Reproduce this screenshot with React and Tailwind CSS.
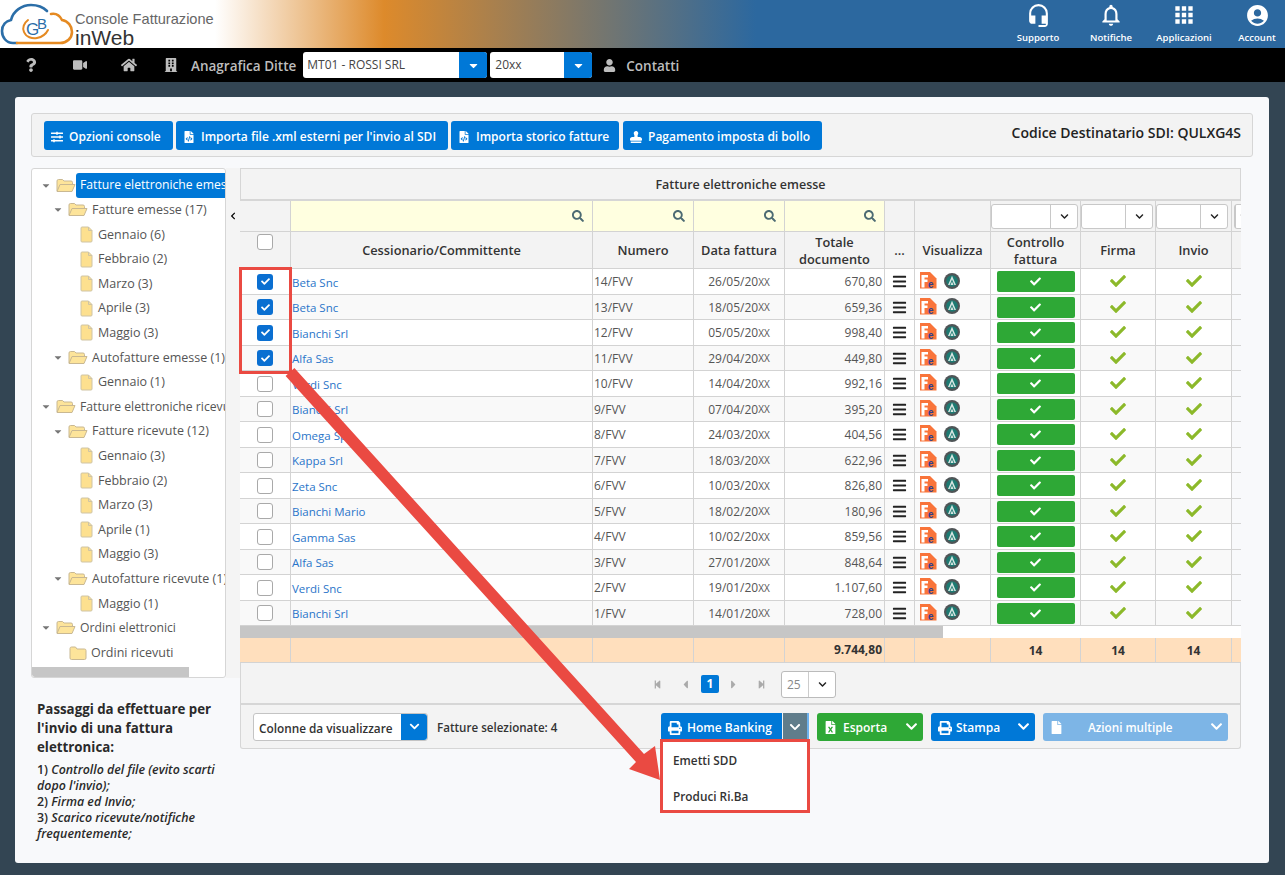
import React from "react";
import { FaQuestion, FaVideo, FaHome, FaBuilding, FaUser, FaCaretDown, FaChevronDown, FaChevronLeft, FaSearch, FaPrint, FaFileExcel, FaFile, FaStamp, FaFileCode, FaCheck, FaBars, FaCaretLeft, FaCaretRight, FaStepBackward, FaStepForward, FaSlidersH } from "react-icons/fa";
import { MdHeadsetMic, MdNotificationsNone, MdApps, MdAccountCircle } from "react-icons/md";

const cols = "grid grid-cols-[51px_302px_101px_91px_100px_30px_76px_90px_75px_76px_9px]";
const rows = [
  ["Beta Snc", "14/FVV", "26/05/20", "670,80", 1],
  ["Beta Snc", "13/FVV", "18/05/20", "659,36", 1],
  ["Bianchi Srl", "12/FVV", "05/05/20", "998,40", 1],
  ["Alfa Sas", "11/FVV", "29/04/20", "449,80", 1],
  ["Verdi Snc", "10/FVV", "14/04/20", "992,16", 0],
  ["Bianchi Srl", "9/FVV", "07/04/20", "395,20", 0],
  ["Omega Spa", "8/FVV", "24/03/20", "404,56", 0],
  ["Kappa Srl", "7/FVV", "18/03/20", "622,96", 0],
  ["Zeta Snc", "6/FVV", "10/03/20", "826,80", 0],
  ["Bianchi Mario", "5/FVV", "18/02/20", "180,96", 0],
  ["Gamma Sas", "4/FVV", "10/02/20", "859,56", 0],
  ["Alfa Sas", "3/FVV", "27/01/20", "848,64", 0],
  ["Verdi Snc", "2/FVV", "19/01/20", "1.107,60", 0],
  ["Bianchi Srl", "1/FVV", "14/01/20", "728,00", 0],
];
const tree = [
  [0, "open", "Fatture elettroniche emesse", true],
  [1, "open", "Fatture emesse (17)"],
  [2, "file", "Gennaio (6)"],
  [2, "file", "Febbraio (2)"],
  [2, "file", "Marzo (3)"],
  [2, "file", "Aprile (3)"],
  [2, "file", "Maggio (3)"],
  [1, "open", "Autofatture emesse (1)"],
  [2, "file", "Gennaio (1)"],
  [0, "open", "Fatture elettroniche ricevute"],
  [1, "open", "Fatture ricevute (12)"],
  [2, "file", "Gennaio (3)"],
  [2, "file", "Febbraio (2)"],
  [2, "file", "Marzo (3)"],
  [2, "file", "Aprile (1)"],
  [2, "file", "Maggio (3)"],
  [1, "open", "Autofatture ricevute (1)"],
  [2, "file", "Maggio (1)"],
  [0, "open", "Ordini elettronici"],
  [1, "closed", "Ordini ricevuti"],
];

function FolderOpen() {
  return (
    <svg width="20" height="15" viewBox="0 0 20 15" className="shrink-0">
      <path d="M1 13V3q0-1.500 1.500-1.500h4L8 3h7q1.500 0 1.500 1.500V6" fill="#fde49a" stroke="#c9b892" />
      <path d="M1 13.500 4 6.500h15l-3 7z" fill="#fde49a" stroke="#c9b892" />
    </svg>
  );
}
function FolderClosed() {
  return (
    <svg width="18" height="14" viewBox="0 0 18 14" className="shrink-0">
      <path d="M1 12V2.500Q1 1 2.500 1h4L8 3h7.500Q17 3 17 4.500V12q0 1.500-1.500 1.500h-13Q1 13.500 1 12z" fill="#fde49a" stroke="#c9b892" />
    </svg>
  );
}
function FileIco() {
  return (
    <svg width="13" height="17" viewBox="0 0 13 17" className="shrink-0">
      <path d="M1 2q0-1 1-1h6.500L12 4.500V15q0 1-1 1H2q-1 0-1-1z" fill="#fde08f" stroke="#cfc4a4" />
      <path d="M8.500 1v3.500H12" fill="none" stroke="#cfc4a4" />
    </svg>
  );
}
function Logo() {
  return (
    <svg width="74" height="48" viewBox="0 0 74 48" className="shrink-0">
      <path d="M17 43H13C6 43 2 37 2 31c0-6 4-10 9-11C13 11 22 5 31 5c6 0 12 2 16 6" fill="none" stroke="#2b6ea8" strokeWidth="2.600" strokeLinecap="round" />
      <path d="M17 43h43c7 0 12-5 12-11 0-6-4-11-10-12-2-4-6-7-11-6" fill="none" stroke="#e58a22" strokeWidth="2.600" strokeLinecap="round" />
      <path d="M28 20C24 23 22 28 24 32c2 5 8 7 13 6 5-1 9-4 11-8" fill="none" stroke="#e58a22" strokeWidth="2" strokeLinecap="round" />
      <text x="26" y="35" fontFamily="'Liberation Sans',sans-serif" fontSize="17" fill="#2b6ea8">G</text>
      <text x="37" y="29" fontFamily="'Liberation Sans',sans-serif" fontSize="15" fill="#2b6ea8">B</text>
    </svg>
  );
}
function FeIcon() {
  return (
    <svg width="17" height="17" viewBox="0 0 17 17" className="shrink-0">
      <path d="M0 0h10l6.500 6.500V16.500H0z" fill="#f9743a" />
      <path d="M1.500 3h6.500v2.500H4.500v2H7.500V10H4.500v5.500h-3z" fill="#fff" />
      <text x="8" y="15.500" fontFamily="'Liberation Sans',sans-serif" fontWeight="700" fontSize="10" fill="#2f3f8f">e</text>
    </svg>
  );
}
function Badge() {
  return (
    <svg width="16" height="16" viewBox="0 0 16 16" className="shrink-0">
      <circle cx="8" cy="8" r="8" fill="#4f5557" />
      <circle cx="8" cy="8" r="5.800" fill="#1d7a72" />
      <path d="M8 2.800 12 12h-1.600L8 6.500 5.600 12H4z M8 8.500l1.500 3.500h-3z" fill="#d6e6e2" />
    </svg>
  );
}
function Box({ on }) {
  return on ? (
    <span className="flex h-4 w-4 items-center justify-center rounded-[3px] bg-[#0a6fd1] text-white">
      <FaCheck className="text-[9px]" />
    </span>
  ) : (
    <span className="block h-4 w-4 rounded-[3px] border border-[#a9a9a9] bg-white" />
  );
}
function Btn({ icon, children, w }) {
  return (
    <div className={`flex h-[29px] items-center gap-[6px] rounded-[3px] bg-[#0078d7] pl-[7px] pt-[3px] text-[12px] font-semibold text-white ${w}`}>
      <span className="flex w-[12px] justify-center">{icon}</span>
      <span>{children}</span>
    </div>
  );
}
function SplitBtn({ icon, label, bg, w, tw }) {
  return (
    <div className={`flex h-[28px] items-center rounded-[3px] ${bg} text-[12px] font-semibold text-white ${w}`}>
      <span className={`flex h-full items-center pt-[2px] ${tw}`}>{icon}{label}</span>
      <span className="ml-auto mr-[4px] flex w-4 justify-center"><FaChevronDown className="text-[13px]" /></span>
    </div>
  );
}
function Cell({ className = "", children, bg = "" }) {
  return <div className={`flex min-w-0 items-center overflow-hidden border-r border-[#d3d3d3] ${bg} ${className}`}>{children}</div>;
}
function Drop({ w }) {
  return (
    <div className={`flex h-[25px] items-stretch rounded-[3px] border border-[#c8c8c8] bg-white ${w}`}>
      <span className="flex-1" />
      <span className="flex w-[27px] items-center justify-center border-l border-[#c8c8c8]"><FaChevronDown className="text-[9px] text-[#222]" /></span>
    </div>
  );
}

export default function App() {
  return (
    <div className="relative flex h-[875px] w-[1285px] flex-col overflow-hidden bg-[#334553] font-['Open_Sans','Noto_Sans',sans-serif] text-[12px] text-[#333]">
      <header className="flex h-[48px] shrink-0 items-stretch justify-between bg-[linear-gradient(90deg,#fff_0,#fff_215px,#dd8a2b_384px,#2c689f_756px,#2c689f_100%)]">
        <div className="flex items-center">
          <Logo />
          <div className="ml-[1px] flex flex-col self-start pt-[11px] text-[#555]">
            <span className="font-['Liberation_Sans',sans-serif] text-[14.600px] leading-[17px] text-[#666]">Console Fatturazione</span>
            <span className="font-['Liberation_Sans',sans-serif] text-[21px] leading-[20px] text-[#333]">inWeb</span>
          </div>
        </div>
        <nav className="flex items-start text-white">
          {[
            [<MdHeadsetMic key="a" className="text-[25px]" />, "Supporto", "w-[90px]"],
            [<MdNotificationsNone key="b" className="text-[26px]" />, "Notifiche", "w-[56px]"],
            [<MdApps key="c" className="text-[26px]" />, "Applicazioni", "w-[90px]"],
            [<MdAccountCircle key="d" className="text-[25px]" />, "Account", "w-[56px]"],
          ].map(([ic, t, w]) => (
            <div key={t} className={`flex flex-col items-center pt-[1px] ${w}`}>
              <div className="flex h-[28px] items-center">{ic}</div>
              <span className="mt-[2px] whitespace-nowrap text-[9.500px] font-semibold leading-[14px]">{t}</span>
            </div>
          ))}
        </nav>
      </header>
      <div className="flex h-[34px] shrink-0 items-center bg-black text-[#bdbdbd]">
        <FaQuestion className="ml-[24px] text-[14px]" />
        <FaVideo className="ml-[35px] text-[14px]" />
        <FaHome className="ml-[34px] text-[16px]" />
        <FaBuilding className="ml-[27px] text-[14px]" />
        <span className="ml-[13px] pt-[2px] text-[13.500px] font-semibold">Anagrafica Ditte</span>
        <div className="ml-[7px] flex h-[26px] w-[184px] rounded-[3px] bg-white">
          <span className="flex-1 pl-[4px] text-[12px] leading-[26px] text-[#444]">MT01 - ROSSI SRL</span>
          <span className="flex w-[28px] items-center justify-center rounded-r-[3px] bg-[#0078d7] text-white"><FaCaretDown className="text-[13px]" /></span>
        </div>
        <div className="ml-[3px] flex h-[26px] w-[102px] rounded-[3px] bg-white">
          <span className="flex-1 pl-[5px] text-[12px] leading-[26px] text-[#444]">20xx</span>
          <span className="flex w-[28px] items-center justify-center rounded-r-[3px] bg-[#0078d7] text-white"><FaCaretDown className="text-[13px]" /></span>
        </div>
        <FaUser className="ml-[11px] text-[13px]" />
        <span className="ml-[10px] pt-[2px] text-[13.500px] font-semibold">Contatti</span>
      </div>

      <main className="mx-[15px] mt-[15px] flex h-[766px] w-[1254px] flex-col rounded-[3px] bg-[#f8f9fb] px-[16px] pt-[16px]">
        <div className="flex h-[44px] shrink-0 items-center justify-between rounded-[3px] border border-[#d6d6d6] bg-[#f3f3f3] pl-[12px] pr-[11px]">
          <div className="flex">
            <Btn w="w-[129px]" icon={<FaSlidersH className="text-[12px]" />}>Opzioni console</Btn>
            <div className="w-[3px]" />
            <Btn w="w-[272px]" icon={<FaFileCode className="text-[12px]" />}>Importa file .xml esterni per l'invio al SDI</Btn>
            <div className="w-[3px]" />
            <Btn w="w-[168px]" icon={<FaFileCode className="text-[12px]" />}>Importa storico fatture</Btn>
            <div className="w-[4px]" />
            <Btn w="w-[199px]" icon={<FaStamp className="text-[12px]" />}>Pagamento imposta di bollo</Btn>
          </div>
          <span className="mb-[6px] text-[14px] font-semibold text-[#222]">Codice Destinatario SDI: QULXG4S</span>
        </div>

        <div className="mt-[11px] flex flex-1 items-start">
          <aside className="flex w-[209px] shrink-0 flex-col">
            <div className="flex items-start">
              <div className="relative h-[510px] w-[195px] overflow-hidden rounded-[3px] border border-[#d6d6d6] bg-white pt-[4px] text-[12.500px] text-[#555]">
                {tree.map(([lvl, kind, t, sel], i) => (
                  <div key={i} className={`flex h-[24.600px] items-center whitespace-nowrap ${lvl === 0 ? "pl-[8px] text-[12.200px]" : lvl === 1 ? "pl-[20px]" : "pl-[48px]"}`}>
                    {kind === "open" ? <FaCaretDown className="w-[12px] shrink-0 text-[11px] text-[#777]" /> : null}
                    {kind === "closed" ? <span className="w-[17px] shrink-0" /> : null}
                    {kind === "file" ? <FileIco /> : kind === "open" ? <span className="ml-[4px] shrink-0"><FolderOpen /></span> : <FolderClosed />}
                    {sel ? (
                      <span className="flex h-[25px] flex-1 items-center rounded-l-[3px] bg-[#0078d7] pl-[4px] text-white">{t}</span>
                    ) : (
                      <span className={kind === "file" ? "ml-[5px] pt-[1px]" : "ml-[4px] pt-[1px]"}>{t}</span>
                    )}
                  </div>
                ))}
                <div className="absolute bottom-0 left-0 h-[10px] w-[157px] rounded-bl-[3px] bg-[#c6c6c6]" />
              </div>
              <div className="flex h-[510px] w-[14px] shrink-0 flex-col items-center bg-[#f4f4f4] pt-[44px]">
                <FaChevronLeft className="text-[8px] text-black" />
              </div>
            </div>
            <div className="mt-[22px] w-[192px] pl-[6px] text-[#2a2a2a]">
              <p className="text-[13.300px] font-bold leading-[19px]">Passaggi da effettuare per l'invio di una fattura elettronica:</p>
              <div className="mt-[5px] whitespace-nowrap text-[12.400px] font-semibold italic leading-[16px]">
                <p><span className="not-italic">1) </span>Controllo del file (evito scarti</p>
                <p>dopo l'invio);</p>
                <p><span className="not-italic">2) </span>Firma ed Invio;</p>
                <p><span className="not-italic">3) </span>Scarico ricevute/notifiche</p>
                <p>frequentemente;</p>
              </div>
            </div>
          </aside>

          <section className="w-[1001px]">
            <div className="flex h-[33px] items-center justify-center border border-b-2 border-[#d6d6d6] bg-[#f3f3f3] pt-[2px] text-[12.500px] font-semibold text-[#333]">Fatture elettroniche emesse</div>
            <div className={`${cols} h-[31px] overflow-hidden border-b border-[#d3d3d3]`}>
              <Cell bg="bg-[#f3f3f3]" />
              {[0, 1, 2, 3].map((k) => (
                <Cell key={k} bg="bg-[#ffffe0]" className="justify-end pr-[8px]"><FaSearch className="text-[12px] text-[#4d6b73]" /></Cell>
              ))}
              <Cell bg="bg-[#f3f3f3]" />
              <Cell bg="bg-[#f3f3f3]" />
              <Cell bg="bg-[#f3f3f3]"><Drop w="w-[87px]" /></Cell>
              <Cell bg="bg-[#f3f3f3]"><Drop w="w-[72px]" /></Cell>
              <Cell bg="bg-[#f3f3f3]"><Drop w="w-[72px]" /></Cell>
              <div className="flex items-center overflow-hidden bg-[#f3f3f3] pl-[2px]"><Drop w="w-[20px]" /></div>
            </div>
            <div className={`${cols} h-[37px] border-b border-[#d3d3d3] bg-[#f3f3f3] text-center text-[12.800px] font-semibold leading-[17px] text-[#333]`}>
              <Cell className="justify-center pb-[17px]"><Box /></Cell>
              {["Cessionario/Committente", "Numero", "Data fattura", "Totale documento", "...", "Visualizza", "Controllo fattura", "Firma", "Invio"].map((h) => (
                <Cell key={h} className="justify-center pt-[1px]">{h}</Cell>
              ))}
              <div />
            </div>
            {rows.map((r, i) => (
              <div key={i} className={`${cols} h-[25.500px] border-b border-[#d3d3d3] ${i % 2 ? "bg-[#f9f9f9]" : "bg-white"}`}>
                <Cell className="justify-center pt-[1px]"><Box on={r[4]} /></Cell>
                <Cell className="pl-[1px] pt-[2px] text-[11.500px] text-[#2a75c9]">{r[0]}</Cell>
                <Cell className="pl-[1px] pt-[2px] text-[#555]">{r[1]}</Cell>
                <Cell className="justify-center pt-[2px] text-[#555]">{r[2]}<span className="text-[10px]">XX</span></Cell>
                <Cell className="justify-end pr-[2px] pt-[2px] text-[#555]">{r[3]}</Cell>
                <Cell className="justify-center pt-[1px] text-[#222]"><FaBars className="text-[15px]" /></Cell>
                <Cell className="gap-[7px] pb-[1px] pl-[5px]"><FeIcon /><Badge /></Cell>
                <Cell className="justify-center pt-[1px]">
                  <span className="flex h-[21px] w-[78px] items-center justify-center rounded-[2px] bg-[#2ea836] text-white"><FaCheck className="text-[11px]" /></span>
                </Cell>
                <Cell className="justify-center"><FaCheck className="text-[16px] text-[#8cb92a]" /></Cell>
                <Cell className="justify-center"><FaCheck className="text-[16px] text-[#8cb92a]" /></Cell>
                <div className="bg-[#f8f9fb]" />
              </div>
            ))}
            <div className="h-[12px] bg-white">
              <div className="h-full w-[703px] bg-[#c6c6c6]" />
            </div>
            <div className={`${cols} h-[25px] border-b border-[#d3d3d3] bg-[#ffdfbd] font-bold text-[#333]`}>
              <Cell /><Cell /><Cell /><Cell />
              <Cell className="justify-end pr-[2px]">9.744,80</Cell>
              <Cell /><Cell />
              <Cell className="justify-center pt-[2px]">14</Cell>
              <Cell className="justify-center pt-[2px]">14</Cell>
              <Cell className="justify-center pt-[2px]">14</Cell>
              <div />
            </div>
            <div className="flex h-[42px] items-center justify-center border-x border-b-2 border-[#d6d6d6] bg-[#f3f3f3] pl-[8px] pt-[2px] text-[#aaa]">
              <FaStepBackward className="text-[9px]" />
              <FaCaretLeft className="ml-[17px] text-[13px]" />
              <span className="ml-[9px] flex h-[18px] w-[18px] items-center justify-center rounded-[2px] bg-[#0078d7] font-bold text-white">1</span>
              <FaCaretRight className="ml-[8px] text-[13px]" />
              <FaStepForward className="ml-[17px] text-[9px]" />
              <div className="ml-[15px] flex h-[27px] w-[55px] items-stretch rounded-[3px] border border-[#bbb] bg-white">
                <span className="flex-1 pl-[5px] leading-[25px] text-[#888]">25</span>
                <span className="flex w-[27px] items-center justify-center border-l border-[#ccc]"><FaChevronDown className="text-[9px] text-[#222]" /></span>
              </div>
            </div>
            <div className="flex h-[44px] items-center rounded-b-[3px] border-x border-b border-[#d6d6d6] bg-[#f3f3f3] pl-[12px] pr-[12px]">
              <div className="flex h-[28px] w-[175px] rounded-[3px] border border-[#c4c4c4] bg-white">
                <span className="flex-1 pl-[5px] pt-[1px] text-[11.800px] font-semibold leading-[26px] text-[#333]">Colonne da visualizzare</span>
                <span className="flex w-[26px] items-center justify-center rounded-r-[3px] bg-[#0078d7] text-white"><FaChevronDown className="text-[11px]" /></span>
              </div>
              <span className="ml-[9px] pt-[2px] text-[11.600px] font-semibold text-[#333]">Fatture selezionate: 4</span>
              <div className="ml-auto flex gap-[8px]">
                <div className="relative flex h-[28px] text-[12px] font-semibold text-white">
                  <span className="flex w-[121px] items-center gap-[5px] rounded-l-[3px] bg-[#0078d7] pl-[7px] pt-[2px]"><FaPrint className="text-[14px]" />Home Banking</span>
                  <span className="ml-[1px] flex w-[24px] items-center justify-center bg-[#607d8b]"><FaChevronDown className="text-[12px]" /></span>
                  <span className="h-full w-[2px] bg-[#6db2ee]" />
                </div>
                <SplitBtn bg="bg-[#2ea836]" w="w-[106px]" tw="gap-[6px] pl-[7px]" icon={<FaFileExcel className="text-[13px]" />} label="Esporta" />
                <SplitBtn bg="bg-[#0078d7]" w="w-[104px]" tw="gap-[4px] pl-[7px]" icon={<FaPrint className="text-[14px]" />} label="Stampa" />
                <SplitBtn bg="bg-[#7db5e6]" w="w-[185px]" tw="gap-[25px] pl-[7px] text-[11.700px]" icon={<FaFile className="text-[13px]" />} label="Azioni multiple" />
              </div>
            </div>
          </section>
        </div>
      </main>

      {/* annotation overlays */}
      <div className="absolute left-[660px] top-[739px] flex h-[74px] w-[150px] flex-col gap-[16px] border-[3px] border-[#ea4a42] bg-white pl-[10px] pt-[8px] text-[11.800px] font-semibold text-[#333]">
        <span className="leading-[20px]">Emetti SDD</span>
        <span className="leading-[20px]">Produci Ri.Ba</span>
      </div>
      <div className="absolute left-[239px] top-[267px] h-[107px] w-[53px] border-[3px] border-[#ea4a42]" />
      <svg className="pointer-events-none absolute left-0 top-0" width="1285" height="875">
        <path d="M285.600 376 294.400 368 644 754 655 746 660 780 629 769 636 762z" fill="#ea4a42" />
      </svg>
    </div>
  );
}
